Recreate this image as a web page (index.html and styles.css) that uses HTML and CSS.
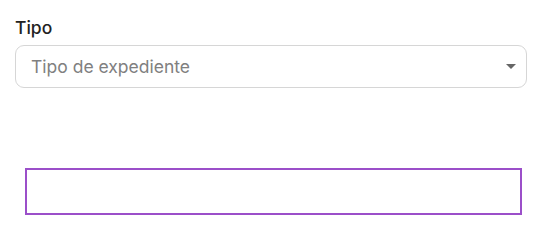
FILE: index.html
```html
<!DOCTYPE html>
<html lang="es">
<head>
<meta charset="utf-8">
<link rel="stylesheet" href="styles.css">
</head>
<body>
<div class="page">
  <div class="field">
    <label class="label">Tipo</label>
    <div class="select">
      <span class="placeholder">Tipo de expediente</span>
      <span class="caret"></span>
    </div>
  </div>
  <div class="box"></div>
</div>
</body>
</html>
```
FILE: styles.css
```css
html, body {
  margin: 0;
  padding: 0;
  background: #fff;
}
.page {
  padding: 17px 18px 0 15px;
  font-family: Inter, "Noto Sans", sans-serif;
}
.field {
  display: flex;
  flex-direction: column;
  gap: 6px;
}
.label {
  font-size: 17.5px;
  line-height: 22px;
  color: #222;
  font-weight: 500;
}
.select {
  height: 41px;
  border: 1px solid #d6d6d6;
  border-radius: 9px;
  display: flex;
  align-items: center;
  justify-content: space-between;
  padding: 0 10px 0 15px;
}
.placeholder {
  font-size: 17.5px;
  color: #808080;
}
.caret {
  width: 0;
  height: 0;
  border-left: 5px solid transparent;
  border-right: 5px solid transparent;
  border-top: 5px solid #666;
}
.box {
  margin: 80px 5px 0 10px;
  height: 43px;
  border: 2px solid #9b4fc9;
}
```
